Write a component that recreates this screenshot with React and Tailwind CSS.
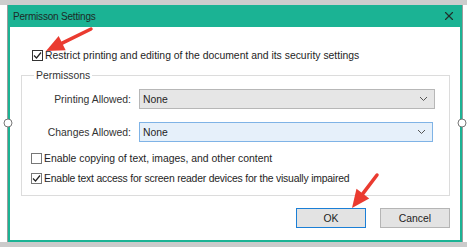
import { X } from "lucide-react";

function Box({ checked, dark }) {
  return (
    <span
      className={`inline-flex h-[11px] w-[11px] shrink-0 items-center justify-center border bg-white ${
        dark ? "border-[#333]" : "border-[#777]"
      }`}
    >
      {checked && (
        <svg width="9" height="9" viewBox="0 0 9 9">
          <path d="M1 4.5 L3.5 7 L8 1.5" fill="none" stroke="#222" strokeWidth="1.2" />
        </svg>
      )}
    </span>
  );
}

function Chevron() {
  return (
    <svg width="9" height="6" viewBox="0 0 9 6" className="mr-[6px]">
      <path d="M1 1 L4.5 4.5 L8 1" fill="none" stroke="#555" strokeWidth="1" />
    </svg>
  );
}

function Arrow({ x1, y1, x2, y2 }) {
  const dx = x2 - x1;
  const dy = y2 - y1;
  const len = Math.hypot(dx, dy);
  const ux = dx / len;
  const uy = dy / len;
  const bx = x2 - ux * 18;
  const by = y2 - uy * 18;
  const px = -uy * 8;
  const py = ux * 8;
  return (
    <g>
      <line x1={x1} y1={y1} x2={bx} y2={by} stroke="#ea3b30" strokeWidth="3.5" strokeLinecap="round" />
      <polygon
        points={`${x2},${y2} ${bx + px},${by + py} ${bx - px},${by - py}`}
        fill="#ea3b30"
      />
    </g>
  );
}

export default function App() {
  return (
    <div
      className="relative h-[247px] w-[467px] overflow-hidden bg-white text-[10.4px] leading-[13px] text-[#1e1e1e]"
      style={{ fontFamily: "'Liberation Sans', Arial, sans-serif" }}
    >
      <div className="h-[5px] bg-[#cdcdcd]" />
      <div className="ml-[7px] w-[456px] border-x border-[#9c9c9c]">
        <div className="flex h-[237px] flex-col border-2 border-t-0 border-[#1bb394]">
          <div className="flex h-[22px] items-center justify-between bg-[#1bb394] pl-[3px] pr-[4px]">
            <span className="text-[10px] tracking-[-0.2px] text-[#1d2a27]">Permisson Settings</span>
            <X size={14} strokeWidth={2} className="text-[#20302c]" />
          </div>

          <div className="flex flex-1 flex-col bg-white pl-[11px] pr-[10px] pt-[22px]">
            <div className="flex items-center gap-[2px] pl-[11px]">
              <Box checked dark />
              <span>Restrict printing and editing of the document and its security settings</span>
            </div>

            <fieldset className="mt-[7px] border border-[#dcdcdc] pb-[10px] pl-[9px] pr-[14px]">
              <legend className="ml-[3px] px-[2px] text-[#333]">Permissons</legend>

              <div className="mt-[7px] flex items-center gap-[8px]">
                <span className="w-[100px] text-right text-[#333]">Printing Allowed:</span>
                <div className="flex h-[20px] flex-1 items-center justify-between border border-[#b7b7b7] bg-[#e6e6e6] pl-[3px]">
                  <span>None</span>
                  <Chevron />
                </div>
              </div>

              <div className="mt-[13px] flex items-center gap-[8px]">
                <span className="w-[100px] text-right text-[#333]">Changes Allowed:</span>
                <div className="mr-[2px] flex h-[20px] flex-1 items-center justify-between border border-[#7fb3e6] bg-[#e6f0fa] pl-[3px]">
                  <span>None</span>
                  <Chevron />
                </div>
              </div>

              <div className="mt-[10px] flex items-center gap-[2px]">
                <Box />
                <span>Enable copying of text, images, and other content</span>
              </div>
              <div className="mt-[7px] flex items-center gap-[2px]">
                <Box checked />
                <span className="tracking-[-0.2px]">
                  Enable text access for screen reader devices for the visually impaired
                </span>
              </div>
            </fieldset>

            <div className="mt-[12px] flex justify-end gap-[14px]">
              <button className="h-[20px] w-[70px] border border-[#1b7fd6] bg-[#e3e3e3]">OK</button>
              <button className="h-[20px] w-[70px] border border-[#b5b5b5] bg-[#e3e3e3]">Cancel</button>
            </div>
          </div>
        </div>
      </div>
      <div className="h-[5px] bg-[#cbcbcb]" />

      <svg className="pointer-events-none absolute left-0 top-0" width="467" height="247">
        <circle cx="8" cy="123" r="4" fill="white" stroke="#777" strokeWidth="1" />
        <circle cx="462" cy="123" r="4" fill="white" stroke="#777" strokeWidth="1" />
        <Arrow x1={91} y1={29} x2={46} y2={51} />
        <Arrow x1={377} y1={175} x2={352} y2={208} />
      </svg>
    </div>
  );
}
